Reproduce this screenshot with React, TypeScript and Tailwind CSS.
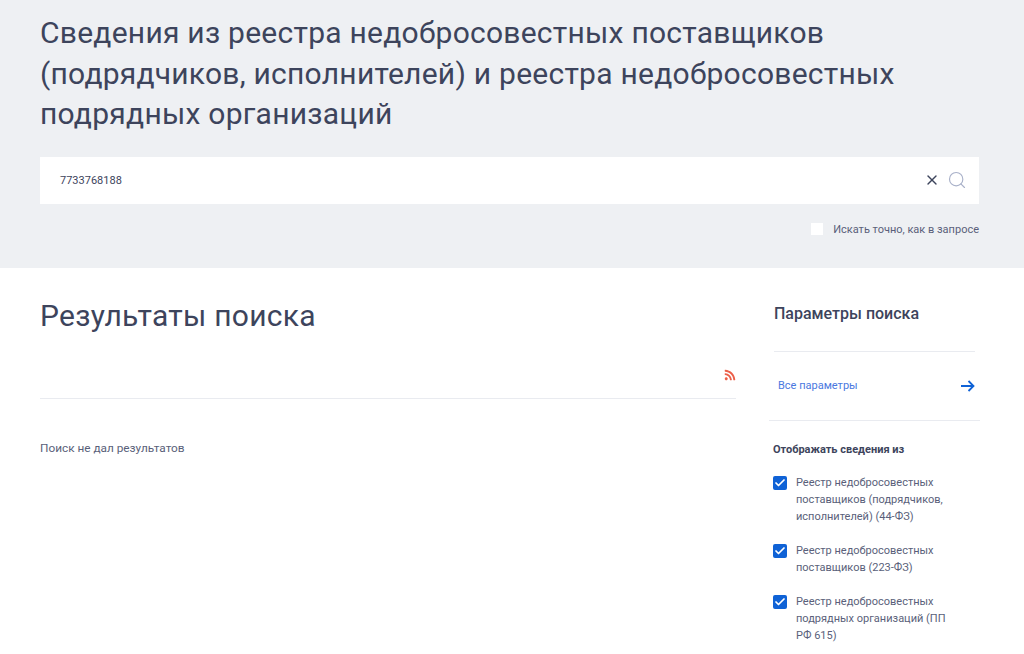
import { X, Search, Check } from 'lucide-react'
import { FaRss } from 'react-icons/fa'

const registries = [
  'Реестр недобросовестных поставщиков (подрядчиков, исполнителей) (44-ФЗ)',
  'Реестр недобросовестных поставщиков (223-ФЗ)',
  'Реестр недобросовестных подрядных организаций (ПП РФ 615)',
]

function RegistryOption({ label }: { label: string }) {
  return (
    <div className="flex items-start gap-[9px] -ml-[1px]">
      <div className="w-[14px] h-[14px] mt-[2px] shrink-0 rounded-[2px] bg-[#0f62d6] flex items-center justify-center">
        <Check className="w-3 h-3 text-white" strokeWidth={3.5} />
      </div>
      <p className="w-[155px] text-[11px] leading-[17px] text-[#5a5f7a]">{label}</p>
    </div>
  )
}

export default function App() {
  return (
    <div className="h-[654px] overflow-hidden bg-white text-[#3d445c] font-['Roboto',sans-serif]">
      <header className="h-[268px] bg-[#eef0f3] px-[40px] pt-[13px]">
        <h1 className="text-[30px] leading-[40.5px] tracking-[0.25px] w-[900px]">
          Сведения из реестра недобросовестных поставщиков (подрядчиков, исполнителей) и реестра недобросовестных подрядных организаций
        </h1>
        <div className="mt-[22px] mr-[5px] h-[47px] bg-white flex items-center pl-[20px] pr-[12px]">
          <span className="flex-1 pt-[2px] text-[11px] text-[#3d445c]">7733768188</span>
          <X className="w-[16px] h-[16px] text-[#3d445c]" strokeWidth={2} />
          <Search className="w-[20px] h-[20px] ml-[7px] text-[#a9b1c9]" strokeWidth={1.4} />
        </div>
        <div className="mt-[19px] mr-[5px] flex items-center justify-end gap-[10px]">
          <div className="w-[12px] h-[12px] bg-white" />
          <span className="text-[11px] leading-[13px] text-[#5a5f7a]">Искать точно, как в запросе</span>
        </div>
      </header>
      <main className="flex pl-[40px]">
        <section className="w-[696px] pt-[29px]">
          <h2 className="text-[30px] leading-[38px] tracking-[0.25px]">Результаты поиска</h2>
          <div className="h-[64px] border-b border-[#e9ebf0] flex items-end justify-end pb-[17px]">
            <FaRss className="w-[12px] h-[12px] text-[#ec5f49]" />
          </div>
          <p className="mt-[41px] text-[11.8px] leading-[16px] text-[#5a5f7a]">Поиск не дал результатов</p>
        </section>
        <aside className="w-[206px] ml-[38px] pt-[36px]">
          <h3 className="text-[16px] leading-[20px] font-medium">Параметры поиска</h3>
          <div className="mt-[27px] w-[201px] border-t border-[#e9ebf0]" />
          <div className="h-[68px] w-[201px] pl-[4px] flex items-center justify-between">
            <span className="text-[11px] text-[#4a78e0]">Все параметры</span>
            <svg width="14" height="12" viewBox="0 0 14 12" fill="none" stroke="#0f62d6" strokeWidth="1.8">
              <path d="M0 6h12.5M7.5 1l5 5-5 5" />
            </svg>
          </div>
          <div className="-ml-[5px] border-t border-[#e9ebf0]" />
          <h4 className="-ml-[1px] mt-[21px] text-[11px] leading-[16px] font-bold">Отображать сведения из</h4>
          <div className="mt-[16px] flex flex-col gap-[17px]">
            {registries.map(label => (
              <RegistryOption key={label} label={label} />
            ))}
          </div>
        </aside>
      </main>
    </div>
  )
}
